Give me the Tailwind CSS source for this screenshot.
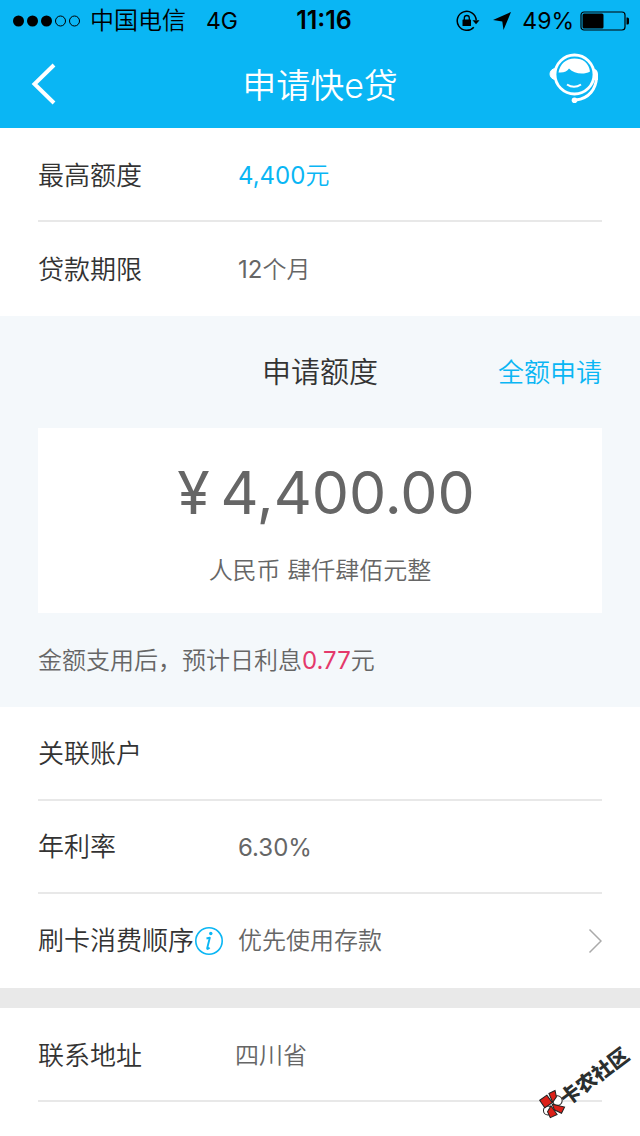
<!DOCTYPE html>
<html lang="zh-CN">
<head>
<meta charset="utf-8">
<meta name="viewport" content="width=device-width, initial-scale=1">
<title>申请快e贷</title>
<script src="https://cdn.jsdelivr.net/npm/@tailwindcss/browser@4"></script>
</head>
<body class="relative min-h-screen overflow-x-hidden bg-white font-['Inter','Noto_Sans_CJK_SC',sans-serif] text-2xl font-[350] text-[#666666]">

<header class="bg-[#0ab6f4]">
  <div class="grid h-10 grid-cols-[1fr_auto_1fr] items-center pt-0.5 pr-2.5 pl-3 text-black">
    <div class="flex items-center">
      <svg class="h-3 w-[70px]" viewBox="0 0 70 12" aria-hidden="true">
        <circle cx="6.500" cy="6" r="5.500"/><circle cx="20.500" cy="6" r="5.500"/><circle cx="34.500" cy="6" r="5.500"/>
        <g fill="none" stroke="#000"><circle cx="48.500" cy="6" r="5"/><circle cx="62.500" cy="6" r="5"/></g>
      </svg>
      <span class="ml-2 leading-9">中国电信</span>
      <span class="ml-5 text-[23px] font-normal">4G</span>
    </div>
    <time class="ml-1.5 text-[25px] font-semibold">11:16</time>
    <div class="flex items-center justify-end">
      <svg class="h-6 w-6" viewBox="0 0 24 24" aria-label="竖排方向锁定">
        <path d="M17.800 18.200A9.500 9.500 0 1 1 20.200 11" fill="none" stroke="#000" stroke-width="1.500"/>
        <path d="M16.500 11.300h7l-3.500 4z"/>
        <rect x="6.500" y="10.500" width="8.500" height="6.500" rx=".6"/>
        <path d="M8.300 11V9a2.500 2.500 0 0 1 5 0v2" fill="none" stroke="#000" stroke-width="1.300"/>
      </svg>
      <svg class="ml-3 h-5 w-5" viewBox="0 0 20 20" aria-label="定位"><path d="M19 1 11.500 19 10.300 10.500 1 9z"/></svg>
      <span class="ml-2.5 text-[23px] font-normal">49%</span>
      <svg class="ml-1.5 h-5 w-[50px]" viewBox="0 0 50 20" aria-label="电量">
        <rect x="1" y="1" width="44" height="18" rx="3" fill="none" stroke="#000" stroke-width="1.200"/>
        <rect x="2.500" y="2.500" width="21" height="15" rx="1.500"/>
        <path d="M46.500 6.500h1a1.500 1.500 0 0 1 1.500 1.500v4a1.500 1.500 0 0 1-1.500 1.500h-1z"/>
      </svg>
    </div>
  </div>
  <div class="grid h-22 grid-cols-[1fr_auto_1fr] items-center px-7 text-white">
    <button type="button" aria-label="返回" class="justify-self-start">
      <svg class="h-11 w-8" viewBox="0 0 32 44"><path d="M26 3 6.500 22 26 41" fill="none" stroke="#fff" stroke-width="4"/></svg>
    </button>
    <h1 class="pt-1 text-[34px] leading-10">申请快e贷</h1>
    <button type="button" aria-label="在线客服" class="-mt-3 mr-3 justify-self-end">
      <svg class="h-[52px] w-[52px]" viewBox="0 0 52 52" fill="none" stroke="#fff">
        <circle cx="26.500" cy="22.500" r="19.500" stroke-width="2.800"/>
        <path d="M7.500 16.500a5.500 5.500 0 0 0 0 11z" fill="#fff" stroke="#fff"/>
        <path d="M45 16c3 1 5 3 5 6v6h-5z" fill="#fff" stroke="none"/>
        <path d="M10.500 20.500C12 12 18 6.500 26.500 6.500S41 11 42 19.500c-6 3.500-16 2.500-21-3-2 3-5 4.500-10.500 4z" fill="#fff" stroke="none"/>
        <path d="M19 32.500c4.500 3 9.500 3 14 0" stroke-width="2"/>
        <path d="M48.500 25.500C48 37 41 46.500 28 48" stroke-width="3"/>
        <circle cx="26.500" cy="48.200" r="2.800" fill="#fff" stroke="none"/>
      </svg>
    </button>
  </div>
</header>

<main>
  <dl class="px-[38px]">
    <div class="flex h-[94px] items-center border-b-2 border-[#e8e8e8] pt-1">
      <dt class="w-[200px] text-[26px] text-[#333333]">最高额度</dt>
      <dd class="text-[#0ab6f4]"><span class="font-normal">4,400</span>元</dd>
    </div>
    <div class="flex h-[94px] items-center pt-0.5">
      <dt class="w-[200px] text-[26px] text-[#333333]">贷款期限</dt>
      <dd><span class="font-normal">12</span>个月</dd>
    </div>
  </dl>

  <section class="bg-[#f4f8fb] px-[38px]">
    <div class="grid h-28 grid-cols-[1fr_auto_1fr] items-center pt-0.5">
      <h2 class="col-start-2 text-[29px] text-[#333333]"><label for="amount">申请额度</label></h2>
      <button type="button" class="justify-self-end text-[26px] text-[#0ab6f4]">全额申请</button>
    </div>
    <div class="flex flex-col items-center bg-white pt-6 pb-6 text-center">
      <input id="amount" type="text" value="¥&#8201;4,400.00" class="h-20 w-full bg-transparent pl-3 text-center text-[59px] font-normal outline-none">
      <p class="mt-[21px] leading-9">人民币 肆仟肆佰元整</p>
    </div>
    <p class="flex h-[94px] items-center pt-0.5">金额支用后，预计日利息<span class="font-normal text-[#e4396b]">0.77</span>元</p>
  </section>

  <dl class="px-[38px]">
    <div class="flex h-[94px] items-center border-b-2 border-[#e8e8e8] pt-0.5">
      <dt class="w-[200px] text-[26px] text-[#333333]">关联账户</dt>
      <dd></dd>
    </div>
    <div class="flex h-[93px] items-center border-b-2 border-[#e8e8e8] pt-0.5">
      <dt class="w-[200px] text-[26px] text-[#333333]">年利率</dt>
      <dd class="font-normal">6.30%</dd>
    </div>
    <div class="flex h-[94px] items-center">
      <dt class="flex w-[200px] items-center text-[26px] text-[#333333]">
        <span class="shrink-0">刷卡消费顺序</span>
        <button type="button" aria-label="刷卡消费顺序说明" class="shrink-0">
          <svg class="h-[30px] w-[30px]" viewBox="0 0 30 30">
            <circle cx="15" cy="15" r="13.200" fill="none" stroke="#0ab6f4" stroke-width="1.600"/>
            <circle cx="16.800" cy="7.500" r="1.700" fill="#0ab6f4"/>
            <path d="M12.500 12.500l3.300-.8-2.600 10.500c-.2 1.300 1 .9 2.400-.6" fill="none" stroke="#0ab6f4" stroke-width="1.900" stroke-linejoin="round"/>
          </svg>
        </button>
      </dt>
      <dd class="flex-1">
        <button type="button" class="flex w-full items-center justify-between">
          <span>优先使用存款</span>
          <svg class="h-7 w-4" viewBox="0 0 16 28" aria-hidden="true"><path d="M3.500 2.500 15 14 3.500 25.500" fill="none" stroke="#aaaaaa" stroke-width="1.500"/></svg>
        </button>
      </dd>
    </div>
  </dl>

  <dl class="border-t-20 border-[#e9e9e9] px-[38px]">
    <div class="flex h-[94px] items-center border-b-2 border-[#e8e8e8] pt-1">
      <dt class="w-[197px] text-[26px] text-[#333333]">联系地址</dt>
      <dd>四川省</dd>
    </div>
  </dl>
</main>

<div class="absolute top-[1036px] right-0 h-21 w-26">
  <svg class="absolute bottom-0 left-0 h-[34px] w-[34px]" viewBox="0 0 100 100" stroke="#222" stroke-width="3" aria-hidden="true">
    <g fill="#fff"><circle cx="63" cy="43" r="14"/><circle cx="35" cy="72" r="13"/></g>
    <g fill="#dc2018"><path d="M11 42 32 27 48 49 26 64z"/><path d="M38 22 56 13 60 32 49 48z"/><path d="M48 54 84 62 75 80 54 70z"/><path d="M44 58 62 84 42 93 34 76z"/></g>
  </svg>
  <span class="absolute bottom-3 left-8 origin-bottom-left -rotate-37 font-['Noto_Sans_CJK_SC',sans-serif] text-xl leading-5 font-black whitespace-nowrap text-[#2b2f2f]">卡农社区</span>
</div>

</body>
</html>
